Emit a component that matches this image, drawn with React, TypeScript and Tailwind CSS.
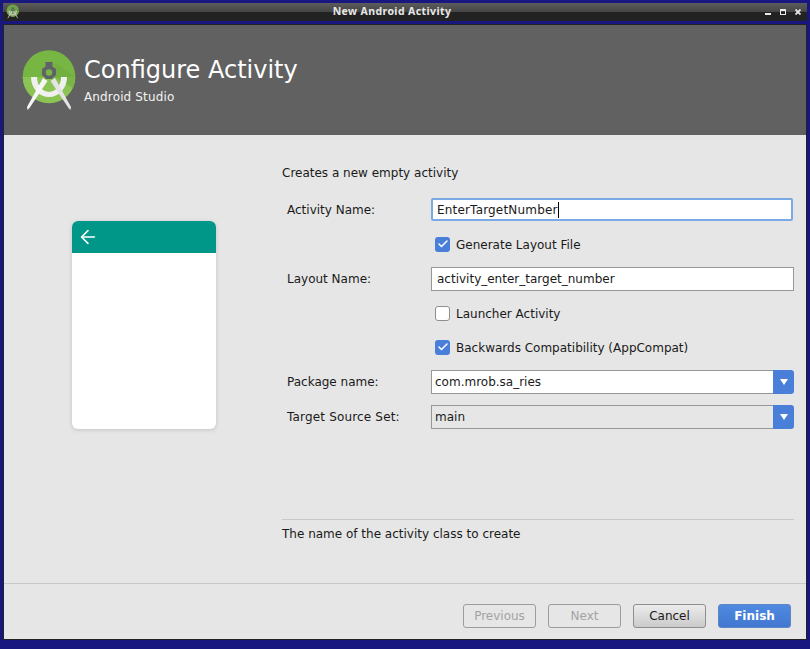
import { Check, ArrowLeft } from 'lucide-react'

function Logo({ size }: { size: number }) {
  return (
    <svg width={size} height={(size * 64) / 60} viewBox="0 0 60 64" className="block">
      <circle cx="29" cy="28.500" r="26.300" fill="#78b643" />
      <path d="M2.700 29a26.300 26.300 0 0 0 52.600 0z" fill="#8bc455" />
      <path d="M35 15 L55.300 29 A26.300 26.300 0 0 1 53 40 L33 29z" fill="#6fa93e" opacity="0.55" />
      <path d="M41 29 A12 15 0 0 1 17 29 H11 A18 20 0 0 0 47 29z" fill="#f0f0f0" />
      <path d="M23 30 L27.500 33 L9.500 60 L7.500 62 L7 59z" fill="#f6f6f6" />
      <path d="M35 30 L30.500 33 L48.500 60 L50.500 62 L51 59z" fill="#e4e4e4" />
      <path d="M25.500 14h7v4.500l3.500 2.500v6l-4 4h-6l-4-4v-6l3.500-2.500z" fill="#5f6266" />
      <circle cx="29" cy="24.500" r="3.200" fill="#78b643" />
    </svg>
  )
}

function Field({ label, children, mt, labelClass }: { label: string; children: React.ReactNode; mt: string; labelClass?: string }) {
  return (
    <div className={`flex items-center ${mt}`}>
      <div className={`w-[149px] pl-[5px] text-[12px] text-[#1a1a1a] ${labelClass ?? ''}`}>{label}</div>
      <div className="w-[363px]">{children}</div>
    </div>
  )
}

function CheckRow({ label, checked, mt }: { label: string; checked: boolean; mt: string }) {
  return (
    <div className={`flex h-[18px] items-center pl-[153px] text-[12px] text-[#1a1a1a] ${mt}`}>
      {checked ? (
        <span className="flex h-[15px] w-[15px] items-center justify-center rounded-[3px] bg-[#4a7fd9]">
          <Check size={12} strokeWidth={3} color="#fff" />
        </span>
      ) : (
        <span className="h-[15px] w-[15px] rounded-[3px] border border-[#8f8f8f] bg-white" />
      )}
      <span className="ml-[6px] pt-[2px]">{label}</span>
    </div>
  )
}

function Combo({ value, white }: { value: string; white: boolean }) {
  return (
    <div className={`flex h-[24px] items-stretch rounded-r-[3px] ${white ? 'bg-white' : 'bg-[#e6e6e6]'}`}>
      <div className="flex flex-1 items-center border-y border-l border-[#979797] pl-[3px] text-[12px] text-[#1a1a1a]">
        {value}
      </div>
      <div className="flex w-[21px] items-center justify-center rounded-r-[3px] bg-[#4a7fd9]">
        <span className="h-0 w-0 border-x-[4px] border-t-[6px] border-x-transparent border-t-white" />
      </div>
    </div>
  )
}

function WizardButton({ label, kind, className }: { label: string; kind: 'off' | 'normal' | 'primary'; className?: string }) {
  const look = {
    off: 'border-[#9c9c9c] text-[#a3a3a3] bg-[#e6e6e6]',
    normal: 'border-[#8e8e8e] text-[#1a1a1a] bg-gradient-to-b from-[#ececec] to-[#cbcbcb]',
    primary: 'border-[#5f86c4] text-white font-bold bg-gradient-to-b from-[#4f8ae0] to-[#4277d0]',
  }[kind]
  return (
    <div className={`flex h-[24px] w-[73px] items-center justify-center rounded-[3px] border text-[12px] ${look} ${className ?? ''}`}>
      {label}
    </div>
  )
}

export default function App() {
  return (
    <div className="flex h-[649px] w-[810px] flex-col overflow-hidden bg-[#17177f] font-['DejaVu_Sans',sans-serif]">
      <div className="relative mx-[3px] mt-[3px] flex h-[18px] shrink-0 flex-col">
        <div className="h-[9px] bg-gradient-to-b from-[#5c5c5c] to-[#454545]" />
        <div className="flex-1 bg-[#222222]" />
        <div className="absolute inset-0 flex items-center justify-center pr-[26px] text-[10.5px] font-bold tracking-[0.4px] text-[#e8e8e8] font-['Noto_Sans',sans-serif]">
          New Android Activity
        </div>
        <div className="absolute left-[3px] top-[1px] opacity-80">
          <Logo size={14} />
        </div>
        <div className="absolute right-[6px] top-[6px] flex items-start gap-[9px]">
          <span className="mt-[4px] h-[2px] w-[6px] bg-[#e8e8e8]" />
          <span className="h-[6px] w-[6px] border border-t-2 border-[#e8e8e8]" />
          <svg width="6" height="6" viewBox="0 0 6 6" className="block">
            <path d="M0.500 0.500L5.500 5.500M5.500 0.500L0.500 5.500" stroke="#e8e8e8" strokeWidth="1.800" />
          </svg>
        </div>
      </div>

      <div className="mx-[3px] mb-[9px] mt-[3px] flex flex-1 flex-col border border-[#222222]">
        <div className="flex h-[110px] shrink-0 items-start bg-[#616161] pl-[16px]">
          <div className="mt-[23px]">
            <Logo size={60} />
          </div>
          <div className="ml-[4px] mt-[30px]">
            <div className="text-[24px] leading-[30px] text-white">Configure Activity</div>
            <div className="mt-[4px] text-[12px] leading-[16px] tracking-[0.14px] text-[#f2f2f2]">Android Studio</div>
          </div>
        </div>

        <div className="flex flex-1 flex-col bg-[#e6e6e6]">
          <div className="flex flex-1">
            <div className="w-[278px] shrink-0 pl-[68px] pt-[86px]">
              <div className="h-[208px] w-[144px] overflow-hidden rounded-[6px] bg-white shadow-[0_1px_4px_rgba(0,0,0,0.15)]">
                <div className="flex h-[32px] items-center bg-[#009688] pl-[5px]">
                  <ArrowLeft size={22} color="#fff" strokeWidth={1.700} />
                </div>
              </div>
            </div>
            <div className="flex-1 pt-[30px]">
              <div className="text-[12px] leading-[16px] text-[#1a1a1a]">Creates a new empty activity</div>
              <Field label="Activity Name:" mt="mt-[17px]">
                <div className="mr-px flex h-[23px] items-center rounded-[2px] border-2 border-[#7aa9e6] bg-white pl-[4px] text-[12px] text-[#1a1a1a]">
                  <span className="tracking-[0.18px]">EnterTargetNumber</span>
                  <span className="h-[16px] w-px bg-black" />
                </div>
              </Field>
              <CheckRow label="Generate Layout File" checked mt="mt-[14px]" />
              <Field label="Layout Name:" mt="mt-[14px]">
                <div className="flex h-[24px] items-center border border-[#979797] bg-white pl-[5px] text-[12px] text-[#1a1a1a]">
                  activity_enter_target_number
                </div>
              </Field>
              <CheckRow label="Launcher Activity" checked={false} mt="mt-[13px]" />
              <CheckRow label="Backwards Compatibility (AppCompat)" checked mt="mt-[16px]" />
              <Field label="Package name:" mt="mt-[14px]">
                <Combo value="com.mrob.sa_ries" white />
              </Field>
              <Field label="Target Source Set:" mt="mt-[11px]" labelClass="tracking-[0.17px]">
                <Combo value="main" white={false} />
              </Field>
            </div>
          </div>
          <div className="ml-[278px] mr-[12px] h-[64px] shrink-0 border-t border-[#c8c8c8] pt-[6px] text-[12px] leading-[16px] text-[#1a1a1a]">
            The name of the activity class to create
          </div>
          <div className="flex h-[56px] shrink-0 items-start border-t border-[#c8c8c8] pr-[15px] pt-[20px]">
            <div className="ml-auto flex">
              <WizardButton label="Previous" kind="off" />
              <WizardButton label="Next" kind="off" className="ml-[12px]" />
              <WizardButton label="Cancel" kind="normal" className="ml-[12px]" />
              <WizardButton label="Finish" kind="primary" className="ml-[12px]" />
            </div>
          </div>
        </div>
      </div>
    </div>
  )
}
